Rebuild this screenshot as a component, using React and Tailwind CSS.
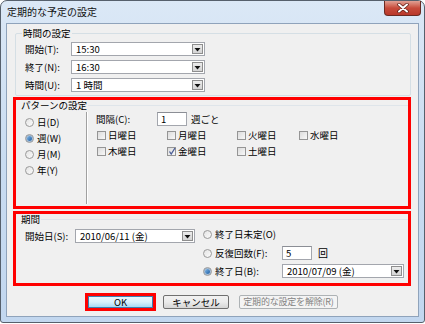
import React from "react";

function Arrow() {
  return (
    <svg width="7" height="5" viewBox="0 0 7 5">
      <path d="M0.5 1h6L3.5 4.5z" fill="#111" />
    </svg>
  );
}

function Combo({ value, w }) {
  return (
    <div
      className={`flex h-[14px] items-stretch border border-[#a3a6ad] bg-white ${w}`}
    >
      <span className="flex-1 pl-[4px] text-[9.5px] leading-[12px] whitespace-nowrap overflow-hidden">
        {value}
      </span>
      <div className="my-[1px] mr-[1px] flex w-[11px] items-center justify-center border border-[#8e8e8e] bg-gradient-to-b from-[#ececec] to-[#d4d4d4]">
        <Arrow />
      </div>
    </div>
  );
}

function TextBox({ value, w }) {
  return (
    <div
      className={`flex h-[14px] items-center border border-[#a3a6ad] border-t-[#8b8e95] bg-white pl-[3px] text-[9.5px] leading-[12px] ${w}`}
    >
      {value}
    </div>
  );
}

function Radio({ checked, label, className = "" }) {
  return (
    <div className={`flex items-center ${className}`}>
      <div className="flex h-[9px] w-[9px] items-center justify-center rounded-full border border-[#9a9a9a] bg-gradient-to-br from-[#e4e4e4] to-[#fbfbfb]">
        {checked && (
          <div className="h-[5px] w-[5px] rounded-full bg-gradient-to-br from-[#7fb6e6] to-[#1b5ea3] ring-1 ring-[#3a6ea5]/40" />
        )}
      </div>
      <span className="ml-[3px] whitespace-nowrap">{label}</span>
    </div>
  );
}

function Check({ checked, label }) {
  return (
    <div className="flex items-center">
      <div className="relative h-[9px] w-[9px] border border-[#959595] bg-gradient-to-br from-[#dcdcdc] to-[#f8f8f8]">
        {checked && (
          <svg
            className="absolute -left-[1px] -top-[2px]"
            width="10"
            height="10"
            viewBox="0 0 10 10"
          >
            <path
              d="M2.5 5.5L4.2 8L8 2"
              fill="none"
              stroke="#4a5d96"
              strokeWidth="1.3"
            />
          </svg>
        )}
      </div>
      <span className="ml-[2px] whitespace-nowrap">{label}</span>
    </div>
  );
}

export default function App() {
  return (
    <div className="h-[324px] w-[425px] overflow-hidden bg-white font-['Noto_Sans_CJK_JP','Liberation_Sans',sans-serif] text-[9.5px] leading-[12px] text-black">
      {/* Window frame */}
      <div className="flex h-[323px] w-[425px] flex-col rounded-t-[7px] rounded-b-[3px] border border-[#56606c] bg-gradient-to-b from-[#dbe8f6] via-[#c9dcf1] to-[#c2d7ef]">
        {/* Title bar */}
        <div className="flex h-[22px] items-start justify-between">
          <span className="mt-[5px] ml-[6px] text-[10px] leading-[12px] text-[#111]">
            定期的な予定の設定
          </span>
          <div className="mr-[3px] flex h-[15px] w-[37px] items-center justify-center rounded-b-[4px] border border-t-0 border-[#6b2a22] bg-gradient-to-b from-[#e0a094] via-[#c74b3b] to-[#b9382a]">
            <svg width="12" height="10" viewBox="0 0 12 10">
              <path
                d="M2 1.5L10 8.5M10 1.5L2 8.5"
                stroke="#5a1a12"
                strokeWidth="3.4"
                strokeLinecap="round"
              />
              <path
                d="M2 1.5L10 8.5M10 1.5L2 8.5"
                stroke="#fff"
                strokeWidth="2"
                strokeLinecap="round"
              />
            </svg>
          </div>
        </div>

        {/* Client area */}
        <div className="mx-[5px] h-[294px] border border-[#8fa3bb] bg-[#f0f0f0]">
          {/* 時間の設定 */}
          <div className="relative mt-[9px] ml-[8px] h-[63px] w-[396px] rounded-[2px] border border-[#d5dfe5] pt-[8px] pl-[9px]">
            <span className="absolute -top-[7px] left-[6px] bg-[#f0f0f0] px-[1px]">
              時間の設定
            </span>
            <div className="flex flex-col gap-[4px]">
              <div className="flex items-center">
                <span className="w-[46px]">開始(T):</span>
                <Combo value="15:30" w="w-[134px]" />
              </div>
              <div className="flex items-center">
                <span className="w-[46px]">終了(N):</span>
                <Combo value="16:30" w="w-[134px]" />
              </div>
              <div className="flex items-center">
                <span className="w-[46px]">時間(U):</span>
                <Combo value="1 時間" w="w-[134px]" />
              </div>
            </div>
          </div>

          {/* パターンの設定 */}
          <div className="mt-[1px] ml-[6px] flex h-[112px] w-[398px] flex-col border-[3px] border-[#ff0000]">
            <div className="flex items-center">
              <span className="ml-[5px] h-[11px] leading-[11px]">パターンの設定</span>
              <div className="ml-[1px] h-px flex-1 bg-[#dfe5ea]" />
            </div>
            <div className="flex flex-1">
              <div className="flex w-[70px] flex-col pt-[3px] pl-[9px]">
                <Radio label="日(D)" className="h-[16px]" />
                <Radio checked label="週(W)" className="h-[16px]" />
                <Radio label="月(M)" className="h-[16px]" />
                <Radio label="年(Y)" className="h-[16px]" />
              </div>
              <div className="mt-[1px] mb-[2px] flex">
                <div className="w-px bg-[#a0a0a0]" />
                <div className="w-px bg-white" />
              </div>
              <div className="flex flex-col pt-[1px] pl-[8px]">
                <div className="flex h-[14px] items-center">
                  <span className="w-[61px]">間隔(C):</span>
                  <TextBox value="1" w="w-[30px]" />
                  <span className="ml-[4px]">週ごと</span>
                </div>
                <div className="mt-[3px] grid grid-cols-[70px_70px_62px_70px] gap-y-[4px] pl-[1px]">
                  <div className="flex h-[12px] items-center">
                    <Check label="日曜日" />
                  </div>
                  <div className="flex h-[12px] items-center">
                    <Check label="月曜日" />
                  </div>
                  <div className="flex h-[12px] items-center">
                    <Check label="火曜日" />
                  </div>
                  <div className="flex h-[12px] items-center">
                    <Check label="水曜日" />
                  </div>
                  <div className="flex h-[12px] items-center">
                    <Check label="木曜日" />
                  </div>
                  <div className="flex h-[12px] items-center">
                    <Check checked label="金曜日" />
                  </div>
                  <div className="flex h-[12px] items-center">
                    <Check label="土曜日" />
                  </div>
                </div>
              </div>
            </div>
          </div>

          {/* 期間 */}
          <div className="mt-[2px] ml-[6px] flex h-[75px] w-[398px] flex-col border-[3px] border-[#ff0000]">
            <div className="flex items-center">
              <span className="ml-[5px] h-[11px] leading-[11px]">期間</span>
              <div className="ml-[1px] h-px flex-1 bg-[#dfe5ea]" />
            </div>
            <div className="flex">
              <div className="flex w-[187px] items-start pt-[4px] pl-[9px]">
                <div className="flex h-[14px] items-center">
                  <span className="w-[50px]">開始日(S):</span>
                  <Combo value="2010/06/11 (金)" w="w-[120px]" />
                </div>
              </div>
              <div className="flex flex-col pt-[2px]">
                <div className="flex h-[14px] items-center">
                  <Radio label="終了日未定(O)" />
                </div>
                <div className="mt-[5px] flex h-[14px] items-center">
                  <div className="w-[79px]">
                    <Radio label="反復回数(F):" />
                  </div>
                  <TextBox value="5" w="w-[30px]" />
                  <span className="ml-[6px] text-[10px]">回</span>
                </div>
                <div className="mt-[4px] flex h-[14px] items-center">
                  <div className="w-[79px]">
                    <Radio checked label="終了日(B):" />
                  </div>
                  <Combo value="2010/07/09 (金)" w="w-[122px]" />
                </div>
              </div>
            </div>
          </div>

          {/* Buttons */}
          <div className="mt-[7px] ml-[78px] flex items-center">
            <div className="border-[3px] border-[#ff0000]">
              <button className="flex h-[12px] w-[65px] items-center justify-center border border-[#3c7fb1] bg-gradient-to-b from-[#eaf6fd] via-[#d9f0fc] to-[#a7d9f5] text-[9.5px] leading-[10px]">
                OK
              </button>
            </div>
            <button className="ml-[7px] flex h-[14px] w-[66px] items-center justify-center rounded-[2px] border border-[#707070] bg-gradient-to-b from-[#f2f2f2] via-[#ebebeb] to-[#d5d5d5] text-[9.5px] leading-[10px]">
              キャンセル
            </button>
            <button className="ml-[10px] flex h-[14px] w-[99px] items-center justify-center whitespace-nowrap rounded-[2px] border border-[#adb2b5] bg-[#f4f4f4] text-[9px] leading-[10px] tracking-[-0.2px] text-[#838383]">
              定期的な設定を解除(R)
            </button>
          </div>
        </div>
      </div>
    </div>
  );
}
